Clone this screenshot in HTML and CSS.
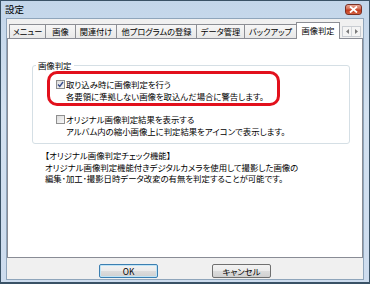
FILE: index.html
```html
<!DOCTYPE html>
<html lang="ja">
<head>
  <meta charset="UTF-8">
  <title>設定</title>
  <link rel="stylesheet" href="styles.css">
</head>
<body>

<div class="window">
  <div class="titlebar">
    <span class="title">設定</span>
    <span class="close">
      <svg width="9" height="7" viewBox="0 0 9 7"><path d="M1 0.5 L8 6.5 M8 0.5 L1 6.5" stroke="#fff" stroke-width="1.8"/></svg>
    </span>
  </div>

  <div class="client">
    <div class="tabs">
      <div class="tab">メニュー</div>
      <div class="tab">画像</div>
      <div class="tab">関連付け</div>
      <div class="tab">他プログラムの登録</div>
      <div class="tab">データ管理</div>
      <div class="tab">バックアップ</div>
      <div class="tab active">画像判定</div>
      <div class="tab-scroll">
        <span><svg width="3" height="5" viewBox="0 0 3 5"><path d="M3 0 L0 2.5 L3 5 Z" fill="#7a7a7a"/></svg></span>
        <span><svg width="3" height="5" viewBox="0 0 3 5"><path d="M0 0 L3 2.5 L0 5 Z" fill="#7a7a7a"/></svg></span>
      </div>
    </div>

    <div class="panel">
      <fieldset class="group">
        <legend>画像判定</legend>
        <div class="option highlight">
          <div class="option-row"><span class="check checked"><svg width="7" height="7" viewBox="0 0 7 7"><path d="M1 3.5 L2.8 5.5 L6 1" fill="none" stroke="#3b4f8c" stroke-width="1.4"/></svg></span>取り込み時に画像判定を行う</div>
          <div class="option-desc">各要領に準拠しない画像を取込んだ場合に警告します。</div>
        </div>
        <div class="option">
          <div class="option-row"><span class="check"></span>オリジナル画像判定結果を表示する</div>
          <div class="option-desc">アルバム内の縮小画像上に判定結果をアイコンで表示します。</div>
        </div>
      </fieldset>

      <div class="note">
        【オリジナル画像判定チェック機能】<br>
        オリジナル画像判定機能付きデジタルカメラを使用して撮影した画像の<br>
        編集･加工･撮影日時データ改変の有無を判定することが可能です。
      </div>
    </div>

    <div class="buttons">
      <div class="btn default">OK</div>
      <div class="btn">キャンセル</div>
    </div>
  </div>
</div>

</body>
</html>
```

FILE: styles.css
```css
body {
  margin: 0;
  background: #1d3f52;
  font-family: "Noto Sans CJK JP", "Noto Sans", sans-serif;
  font-feature-settings: "palt";
  font-size: 8.4px;
  color: #000;
}
.window {
  box-sizing: border-box;
  width: 370px;
  height: 284px;
  border: 1px solid #3a5266;
  border-bottom-width: 2px;
  background: linear-gradient(#c3d6ea, #d3e1f0 40%, #cddcee);
  display: flex;
  flex-direction: column;
}
.titlebar {
  height: 17px;
  display: flex;
  justify-content: space-between;
  align-items: flex-start;
  padding: 0 7px 0 4px;
}
.title {
  font-size: 9.5px;
  line-height: 17px;
}
.close {
  margin-top: 3px;
  width: 17px;
  height: 11px;
  box-sizing: border-box;
  border: 1px solid #7a3024;
  border-radius: 3px;
  background: linear-gradient(#e9a896, #d46a50 45%, #c2391c 55%, #d4603f);
  display: flex;
  align-items: center;
  justify-content: center;
}
.client {
  flex: 1;
  margin: 0 5px 2px 5px;
  border: 1px solid #8fa5bb;
  background: #f0f0f0;
  display: flex;
  flex-direction: column;
}
.tabs {
  height: 19px;
  display: flex;
  align-items: flex-end;
  padding-left: 2px;
}
.tab {
  box-sizing: border-box;
  height: 14px;
  border: 1px solid #8c8e94;
  border-bottom: none;
  border-left: none;
  background: linear-gradient(#f6f6f6, #e8e8e8);
  font-size: 8.2px;
  line-height: 13px;
  text-align: center;
  white-space: nowrap;
}
.tab:first-child {
  border-left: 1px solid #8c8e94;
}
.tab:nth-child(1) { width: 37px; }
.tab:nth-child(2) { width: 30px; }
.tab:nth-child(3) { width: 41px; }
.tab:nth-child(4) { width: 80px; }
.tab:nth-child(5) { width: 48px; }
.tab:nth-child(6) { width: 52px; }
.tab.active {
  width: 44px;
  height: 17px;
  margin-bottom: -1px;
  border-left: 1px solid #8c8e94;
  margin-left: -1px;
  background: #fff;
  position: relative;
  z-index: 1;
  line-height: 14px;
}
.tab-scroll {
  display: flex;
  margin: 0 0 1px 2px;
  border: 1px solid #c9cdd2;
  background: #f4f4f4;
}
.tab-scroll span {
  width: 8px;
  height: 9px;
  display: flex;
  align-items: center;
  justify-content: center;
}
.tab-scroll span + span {
  border-left: 1px solid #d3d6da;
}
.panel {
  height: 220px;
  box-sizing: border-box;
  border: 1px solid #898c95;
  background: #fff;
}
.group {
  margin: 21px 12px 0 24px;
  padding: 0 0 2px 14px;
  border: 1px solid #d5dfe5;
  border-radius: 3px;
}
.group legend {
  margin-left: -11px;
  padding: 0 2px;
  line-height: 11px;
}
.option {
  width: 233px;
  box-sizing: border-box;
  padding: 4px 6px 1px 6px;
  border: 3px solid transparent;
  border-radius: 10px;
  line-height: 12px;
}
.option.highlight {
  border-color: #e2101c;
}
.option-row {
  display: flex;
  align-items: center;
  white-space: nowrap;
}
.option-desc {
  padding-left: 10px;
  white-space: nowrap;
}
.check {
  box-sizing: border-box;
  width: 9px;
  height: 9px;
  margin-right: 1px;
  border: 1px solid #8f8f8f;
  background: linear-gradient(135deg, #dcdcdc, #f8f8f8);
  display: flex;
  align-items: center;
  justify-content: center;
}
.note {
  margin: 6px 0 0 37px;
  line-height: 11.5px;
  white-space: nowrap;
}
.buttons {
  flex: 1;
  display: flex;
  gap: 54px;
  padding: 6px 0 0 92px;
}
.btn {
  box-sizing: border-box;
  width: 59px;
  height: 14px;
  border: 1px solid #707070;
  border-radius: 2px;
  background: linear-gradient(#f3f3f3, #ebebeb 48%, #dcdcdc 52%, #d0d0d0);
  text-align: center;
  line-height: 12px;
}
.btn.default {
  border-color: #3c7fb1;
  box-shadow: inset 0 0 0 1px #bfe4f6;
}
```
